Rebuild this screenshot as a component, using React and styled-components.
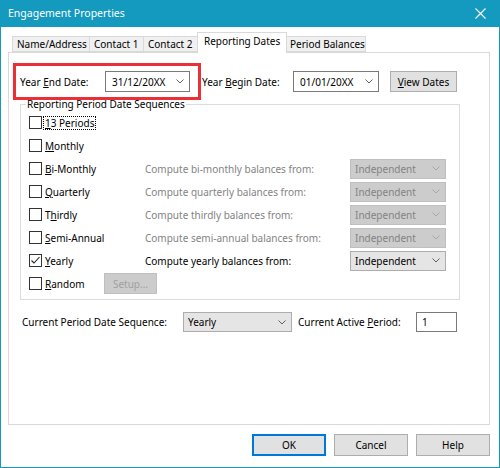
import React from "react";
import styled, { createGlobalStyle } from "styled-components";

const GlobalStyle = createGlobalStyle`
  html, body { margin: 0; padding: 0; background: #ffffff; }
  body { width: 500px; height: 468px; overflow: hidden; font-family: "Noto Sans", "Segoe UI", sans-serif; font-size: 10px; color: #000; }
  * { box-sizing: border-box; }
`;

const Window = styled.div`
  width: 500px;
  height: 468px;
  border: 1px solid #1499bf;
  border-top: none;
  display: flex;
  flex-direction: column;
  background: #ffffff;
`;

const TitleBar = styled.div`
  height: 27px;
  flex: none;
  background: #1499bf;
  color: #ffffff;
  display: flex;
  align-items: center;
  justify-content: space-between;
  padding: 0 13px 1px 7px;
  font-size: 10.5px;
`;

const Body = styled.div`
  flex: 1;
  display: flex;
  flex-direction: column;
  padding: 5px 9px 0 7px;
`;

const TabStrip = styled.div`
  display: flex;
  align-items: flex-end;
  height: 20px;
  padding-left: 4px;
  position: relative;
  z-index: 2;
`;

const Tab = styled.div`
  width: ${(p) => p.$w}px;
  height: ${(p) => (p.$active ? 21 : 16)}px;
  margin-left: ${(p) => p.$ml || 0}px;
  margin-bottom: ${(p) => (p.$active ? -1 : 0)}px;
  border: 1px solid #d9d9d9;
  border-bottom: ${(p) => (p.$active ? "none" : "1px solid #d9d9d9")};
  background: ${(p) => (p.$active ? "#ffffff" : "#f0f0f0")};
  position: relative;
  z-index: ${(p) => (p.$active ? 2 : 1)};
  display: flex;
  align-items: ${(p) => (p.$active ? "flex-start" : "center")};
  padding: ${(p) => (p.$active ? "2px 0 0 6px" : "0 0 0 4px")};
  white-space: nowrap;
  line-height: 13px;
`;

const Panel = styled.div`
  height: 373px;
  border: 1px solid #d9d9d9;
  background: #ffffff;
  padding: 10px 0 0 4px;
  display: flex;
  flex-direction: column;
  position: relative;
  z-index: 1;
`;

const TopRow = styled.div`
  display: flex;
  align-items: center;
  height: 37px;
`;

const Highlight = styled.div`
  width: 188px;
  height: 37px;
  border: 3px solid #ea2f36;
  padding: 0 8px 0 4px;
  display: flex;
  align-items: center;
  position: relative;
  z-index: 3;
`;

const FieldLabel = styled.span`
  width: ${(p) => p.$w}px;
  margin-left: ${(p) => p.$ml || 0}px;
  flex: none;
  white-space: nowrap;
  color: ${(p) => (p.$disabled ? "#838383" : "#000")};
`;

const Key = styled.span`
  text-decoration: underline;
  text-underline-offset: 1px;
`;

const ComboBox = styled.div`
  width: ${(p) => p.$w}px;
  height: ${(p) => p.$h || 21}px;
  flex: none;
  display: flex;
  align-items: center;
  justify-content: space-between;
  padding: 0 5px 0 ${(p) => p.$pl || 4}px;
  border: 1px solid ${(p) => (p.$variant === "edit" ? "#7a7a7a" : p.$variant === "disabled" ? "#bfbfbf" : "#adadad")};
  background: ${(p) => (p.$variant === "edit" ? "#ffffff" : p.$variant === "disabled" ? "#cccccc" : "#e5e5e5")};
  color: ${(p) => (p.$variant === "disabled" ? "#838383" : "#000")};
  margin-left: ${(p) => p.$ml || 0}px;
  white-space: nowrap;
`;

const Button = styled.div`
  width: ${(p) => p.$w}px;
  height: ${(p) => p.$h || 21}px;
  flex: none;
  margin-left: ${(p) => p.$ml || 0}px;
  display: flex;
  align-items: center;
  justify-content: center;
  background: ${(p) => (p.$disabled ? "#cccccc" : "#e1e1e1")};
  border: ${(p) => (p.$default ? "2px solid #0078d7" : p.$disabled ? "1px solid #bfbfbf" : "1px solid #adadad")};
  color: ${(p) => (p.$disabled ? "#a0a0a0" : "#000")};
  white-space: nowrap;
`;

const GroupBox = styled.fieldset`
  margin: -3px 0 0 7px;
  width: 440px;
  min-width: 0;
  border: 1px solid #dcdcdc;
  padding: 0 8px 4px 8px;
`;

const Legend = styled.legend`
  margin-left: -3px;
  padding: 0 1px;
  line-height: 14px;
  white-space: nowrap;
`;

const Row = styled.div`
  display: grid;
  grid-template-columns: 116px 205px 96px;
  align-items: center;
  height: 23px;
`;

const RandomRow = styled.div`
  display: flex;
  align-items: center;
  height: 23px;
`;

const CheckItem = styled.div`
  display: flex;
  align-items: center;
  gap: 1px;
  width: ${(p) => (p.$w ? `${p.$w}px` : "auto")};
  flex: none;
`;

const Box = styled.span`
  width: 13px;
  height: 13px;
  border: 1px solid #333333;
  background: #ffffff;
  display: flex;
  align-items: center;
  justify-content: center;
  flex: none;
`;

const CheckText = styled.span`
  padding: 0 1px;
  border: 1px ${(p) => (p.$focus ? "dotted #000" : "solid transparent")};
  line-height: 12px;
  white-space: nowrap;
`;

const ComputeText = styled.span`
  color: ${(p) => (p.$disabled ? "#838383" : "#000")};
  white-space: nowrap;
`;

const BottomRow = styled.div`
  display: flex;
  align-items: center;
  margin: 12px 0 0 9px;
  height: 20px;
`;

const TextInput = styled.div`
  width: 41px;
  height: 20px;
  border: 1px solid #7a7a7a;
  background: #fff;
  padding-left: 5px;
  display: flex;
  align-items: center;
  flex: none;
`;

const ButtonRow = styled.div`
  display: flex;
  justify-content: flex-end;
  gap: 8px;
  margin-top: 9px;
`;

const Chevron = ({ color = "#606060" }) => (
  <svg width="8" height="5" viewBox="0 0 8 5">
    <polyline points="0.5,0.5 4,4 7.5,0.5" fill="none" stroke={color} strokeWidth="1" />
  </svg>
);

const CloseIcon = () => (
  <svg width="11" height="11" viewBox="0 0 11 11">
    <path d="M0.5 0.5 L10.5 10.5 M10.5 0.5 L0.5 10.5" stroke="#fff" strokeWidth="1.1" />
  </svg>
);

const CheckMark = () => (
  <svg width="11" height="11" viewBox="0 0 11 11">
    <polyline points="1.5,5.5 4,8 9.5,2" fill="none" stroke="#222" strokeWidth="1.1" />
  </svg>
);

const Check = ({ checked, focus, children, w }) => (
  <CheckItem $w={w}>
    <Box>{checked && <CheckMark />}</Box>
    <CheckText $focus={focus}>{children}</CheckText>
  </CheckItem>
);

const Select = ({ value, variant, w, ml, h }) => (
  <ComboBox $variant={variant} $w={w} $ml={ml} $h={h} $pl={variant === "edit" ? 6 : 4}>
    <span>{value}</span>
    <Chevron color={variant === "disabled" ? "#a8a8a8" : "#606060"} />
  </ComboBox>
);

const sequences = [
  { label: <><Key>M</Key>onthly</> },
  { label: <><Key>B</Key>i-Monthly</>, compute: "Compute bi-monthly balances from:" },
  { label: <><Key>Q</Key>uarterly</>, compute: "Compute quarterly balances from:" },
  { label: <>T<Key>h</Key>irdly</>, compute: "Compute thirdly balances from:" },
  { label: <><Key>S</Key>emi-Annual</>, compute: "Compute semi-annual balances from:" },
  { label: <><Key>Y</Key>early</>, compute: "Compute yearly balances from:", checked: true, enabled: true },
];

export default function App() {
  return (
    <>
      <GlobalStyle />
      <Window>
        <TitleBar>
          <span>Engagement Properties</span>
          <CloseIcon />
        </TitleBar>
        <Body>
          <TabStrip>
            <Tab $w={78}>Name/Address</Tab>
            <Tab $w={55} $ml={-1}>Contact 1</Tab>
            <Tab $w={56} $ml={-1}>Contact 2</Tab>
            <Tab $w={90} $ml={-2} $active>Reporting Dates</Tab>
            <Tab $w={81} $ml={-2}>Period Balances</Tab>
          </TabStrip>
          <Panel>
            <TopRow>
              <Highlight>
                <FieldLabel $w={85}>Year <Key>E</Key>nd Date:</FieldLabel>
                <Select variant="edit" value="31/12/20XX" w={85} />
              </Highlight>
              <FieldLabel $w={91} $ml={1}>Year <Key>B</Key>egin Date:</FieldLabel>
              <Select variant="edit" value="01/01/20XX" w={86} />
              <Button $w={67} $ml={11}><span><Key>V</Key>iew Dates</span></Button>
            </TopRow>
            <GroupBox>
              <Legend>Reporting Period Date Sequences</Legend>
              <Row>
                <Check focus><Key>1</Key>3 Periods</Check>
              </Row>
              {sequences.map((s, i) => (
                <Row key={i}>
                  <Check checked={s.checked}>{s.label}</Check>
                  {s.compute ? (
                    <>
                      <ComputeText $disabled={!s.enabled}>{s.compute}</ComputeText>
                      <Select variant={s.enabled ? "list" : "disabled"} value="Independent" w={96} h={20} />
                    </>
                  ) : null}
                </Row>
              ))}
              <RandomRow>
                <Check w={75}><Key>R</Key>andom</Check>
                <Button $w={53} $h={21} $disabled>Setup...</Button>
              </RandomRow>
            </GroupBox>
            <BottomRow>
              <FieldLabel $w={161}>Current Period Date Sequence:</FieldLabel>
              <Select variant="list" value="Yearly" w={109} h={20} />
              <FieldLabel $w={118} $ml={6}>Current Active <Key>P</Key>eriod:</FieldLabel>
              <TextInput>1</TextInput>
            </BottomRow>
          </Panel>
          <ButtonRow>
            <Button $w={74} $h={22} $default>OK</Button>
            <Button $w={74} $h={22}>Cancel</Button>
            <Button $w={74} $h={22}>Help</Button>
          </ButtonRow>
        </Body>
      </Window>
    </>
  );
}
